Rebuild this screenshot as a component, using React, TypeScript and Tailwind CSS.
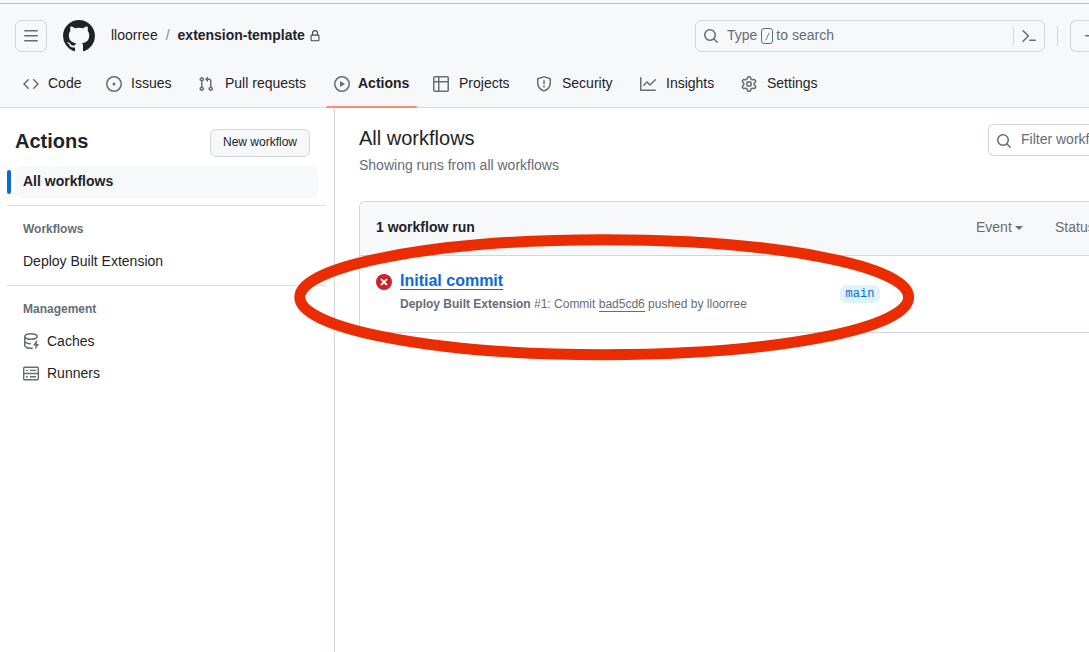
import type { ReactNode } from 'react';

const paths = {
  bars: 'M1 2.75A.75.75 0 0 1 1.75 2h12.5a.75.75 0 0 1 0 1.5H1.75A.75.75 0 0 1 1 2.75Zm0 5A.75.75 0 0 1 1.75 7h12.5a.75.75 0 0 1 0 1.5H1.75A.75.75 0 0 1 1 7.75ZM1.75 12h12.5a.75.75 0 0 1 0 1.5H1.75a.75.75 0 0 1 0-1.5Z',
  github:
    'M8 0c4.42 0 8 3.58 8 8a8.013 8.013 0 0 1-5.45 7.59c-.4.08-.55-.17-.55-.38 0-.27.01-1.13.01-2.2 0-.75-.25-1.23-.54-1.48 1.78-.2 3.65-.88 3.65-3.95 0-.88-.31-1.59-.82-2.15.08-.2.36-1.02-.08-2.12 0 0-.67-.22-2.2.82-.64-.18-1.32-.27-2-.27-.68 0-1.36.09-2 .27-1.53-1.03-2.2-.82-2.2-.82-.44 1.1-.16 1.92-.08 2.12-.51.56-.82 1.28-.82 2.15 0 3.06 1.86 3.75 3.64 3.95-.23.2-.44.55-.51 1.07-.46.21-1.61.55-2.33-.66-.15-.24-.6-.83-1.23-.82-.67.01-.27.38.01.53.34.19.73.9.82 1.13.16.45.68 1.31 2.69.94 0 .67.01 1.3.01 1.49 0 .21-.15.45-.55.38A7.995 7.995 0 0 1 0 8c0-4.42 3.58-8 8-8Z',
  lock: 'M4 4a4 4 0 0 1 8 0v2h.25c.966 0 1.75.784 1.75 1.75v5.5A1.75 1.75 0 0 1 12.25 15h-8.5A1.75 1.75 0 0 1 2 13.25v-5.5C2 6.784 2.784 6 3.75 6H4Zm8.25 3.5h-8.5a.25.25 0 0 0-.25.25v5.5c0 .138.112.25.25.25h8.5a.25.25 0 0 0 .25-.25v-5.5a.25.25 0 0 0-.25-.25ZM10.5 6V4a2.5 2.5 0 1 0-5 0v2Z',
  code: 'm11.28 3.22 4.25 4.25a.75.75 0 0 1 0 1.06l-4.25 4.25a.749.749 0 0 1-1.275-.326.749.749 0 0 1 .215-.734L13.94 8l-3.72-3.72a.749.749 0 0 1 .326-1.275.749.749 0 0 1 .734.215Zm-6.56 0a.751.751 0 0 1 1.042.018.751.751 0 0 1 .018 1.042L2.06 8l3.72 3.72a.749.749 0 0 1-.326 1.275.749.749 0 0 1-.734-.215L.47 8.53a.75.75 0 0 1 0-1.06Z',
  issue:
    'M8 9.5a1.5 1.5 0 1 0 0-3 1.5 1.5 0 0 0 0 3ZM8 0a8 8 0 1 1 0 16A8 8 0 0 1 8 0ZM1.5 8a6.5 6.5 0 1 0 13 0 6.5 6.5 0 0 0-13 0Z',
  pull: 'M1.5 3.25a2.25 2.25 0 1 1 3 2.122v5.256a2.251 2.251 0 1 1-1.5 0V5.372A2.25 2.25 0 0 1 1.5 3.25Zm5.677-.177L9.573.677A.25.25 0 0 1 10 .854V2.5h1A2.5 2.5 0 0 1 13.5 5v5.628a2.251 2.251 0 1 1-1.5 0V5a1 1 0 0 0-1-1h-1v1.646a.25.25 0 0 1-.427.177L7.177 3.427a.25.25 0 0 1 0-.354ZM3.75 2.5a.75.75 0 1 0 0 1.5.75.75 0 0 0 0-1.5Zm0 9.5a.75.75 0 1 0 0 1.5.75.75 0 0 0 0-1.5Zm8.25.75a.75.75 0 1 0 1.5 0 .75.75 0 0 0-1.5 0Z',
  play: 'M8 0a8 8 0 1 1 0 16A8 8 0 0 1 8 0ZM1.5 8a6.5 6.5 0 1 0 13 0 6.5 6.5 0 0 0-13 0Zm4.879-2.773 4.264 2.559a.25.25 0 0 1 0 .428l-4.264 2.559A.25.25 0 0 1 6 10.559V5.442a.25.25 0 0 1 .379-.215Z',
  table:
    'M0 1.75C0 .784.784 0 1.75 0h12.5C15.216 0 16 .784 16 1.75v12.5A1.75 1.75 0 0 1 14.25 16H1.75A1.75 1.75 0 0 1 0 14.25ZM6.5 6.5v8h7.75a.25.25 0 0 0 .25-.25V6.5Zm8-1.5V1.75a.25.25 0 0 0-.25-.25H6.5V5Zm-13 1.5v7.75c0 .138.112.25.25.25H5v-8ZM5 5V1.5H1.75a.25.25 0 0 0-.25.25V5Z',
  shield:
    'M7.467.133a1.748 1.748 0 0 1 1.066 0l5.25 1.68A1.75 1.75 0 0 1 15 3.48V7c0 1.566-.32 3.182-1.303 4.682-.983 1.498-2.585 2.813-5.032 3.855a1.697 1.697 0 0 1-1.33 0c-2.447-1.042-4.049-2.357-5.032-3.855C1.32 10.182 1 8.566 1 7V3.48a1.75 1.75 0 0 1 1.217-1.667Zm.61 1.429a.25.25 0 0 0-.153 0l-5.25 1.68a.25.25 0 0 0-.174.238V7c0 1.358.275 2.666 1.057 3.86.784 1.194 2.121 2.34 4.366 3.297a.196.196 0 0 0 .154 0c2.245-.956 3.582-2.104 4.366-3.298C13.225 9.666 13.5 8.36 13.5 7V3.48a.251.251 0 0 0-.174-.237l-5.25-1.68ZM8.75 4.75v3a.75.75 0 0 1-1.5 0v-3a.75.75 0 0 1 1.5 0ZM9 10.5a1 1 0 1 1-2 0 1 1 0 0 1 2 0Z',
  graph:
    'M1.5 1.75V13.5h13.75a.75.75 0 0 1 0 1.5H.75a.75.75 0 0 1-.75-.75V1.75a.75.75 0 0 1 1.5 0Zm14.28 2.53-5.25 5.25a.75.75 0 0 1-1.06 0L7 7.06 4.28 9.78a.751.751 0 0 1-1.042-.018.751.751 0 0 1-.018-1.042l3.25-3.25a.75.75 0 0 1 1.06 0L10 7.94l4.72-4.72a.751.751 0 0 1 1.042.018.751.751 0 0 1 .018 1.042Z',
  gear: 'M8 0a8.2 8.2 0 0 1 .701.031C9.444.095 9.99.645 10.16 1.29l.288 1.107c.018.066.079.158.212.224.231.114.454.243.668.386.123.082.233.09.299.071l1.103-.303c.644-.176 1.392.021 1.82.63.27.385.506.792.704 1.218.315.675.111 1.422-.364 1.891l-.814.806c-.049.048-.098.147-.088.294.016.257.016.515 0 .772-.01.147.038.246.088.294l.814.806c.475.469.679 1.216.364 1.891a7.977 7.977 0 0 1-.704 1.217c-.428.61-1.176.807-1.82.63l-1.102-.302c-.067-.019-.177-.011-.3.071a5.909 5.909 0 0 1-.668.386c-.133.066-.194.158-.211.224l-.29 1.106c-.168.646-.715 1.196-1.458 1.26a8.006 8.006 0 0 1-1.402 0c-.743-.064-1.289-.614-1.458-1.26l-.289-1.106c-.018-.066-.079-.158-.212-.224a5.738 5.738 0 0 1-.668-.386c-.123-.082-.233-.09-.299-.071l-1.103.303c-.644.176-1.392-.021-1.82-.63a8.12 8.12 0 0 1-.704-1.218c-.315-.675-.111-1.422.363-1.891l.815-.806c.05-.048.098-.147.088-.294a6.214 6.214 0 0 1 0-.772c.01-.147-.038-.246-.088-.294l-.815-.806C.635 6.045.431 5.298.746 4.623a7.92 7.92 0 0 1 .704-1.217c.428-.61 1.176-.807 1.82-.63l1.102.302c.067.019.177.011.3-.071.214-.143.437-.272.668-.386.133-.066.194-.158.211-.224l.29-1.106C6.009.645 6.556.095 7.299.03 7.53.01 7.764 0 8 0Zm-.571 1.525c-.036.003-.108.036-.137.146l-.289 1.105c-.147.561-.549.967-.998 1.189-.173.086-.34.183-.5.29-.417.278-.97.423-1.529.27l-1.103-.303c-.109-.03-.175.016-.195.045-.22.312-.412.644-.573.99-.014.031-.021.11.059.19l.815.806c.411.406.562.957.53 1.456a4.709 4.709 0 0 0 0 .582c.032.499-.119 1.05-.53 1.456l-.815.806c-.081.08-.073.159-.059.19.162.346.353.677.573.989.02.03.085.076.195.046l1.102-.303c.56-.153 1.113-.008 1.53.27.161.107.328.204.501.29.447.222.85.629.997 1.189l.289 1.105c.029.109.101.143.137.146a6.6 6.6 0 0 0 1.142 0c.036-.003.108-.036.137-.146l.289-1.105c.147-.561.549-.967.998-1.189.173-.086.34-.183.5-.29.417-.278.97-.423 1.529-.27l1.103.303c.109.029.175-.016.195-.045.22-.313.411-.644.573-.99.014-.031.021-.11-.059-.19l-.815-.806c-.411-.406-.562-.957-.53-1.456a4.709 4.709 0 0 0 0-.582c-.032-.499.119-1.05.53-1.456l.815-.806c.081-.08.073-.159.059-.19a6.464 6.464 0 0 0-.573-.989c-.02-.03-.085-.076-.195-.046l-1.102.303c-.56.153-1.113.008-1.53-.27a4.44 4.44 0 0 0-.501-.29c-.447-.222-.85-.629-.997-1.189l-.289-1.105c-.029-.11-.101-.143-.137-.146a6.6 6.6 0 0 0-1.142 0ZM11 8a3 3 0 1 1-6 0 3 3 0 0 1 6 0ZM9.5 8a1.5 1.5 0 1 0-3.001.001A1.5 1.5 0 0 0 9.5 8Z',
  search:
    'M10.68 11.74a6 6 0 0 1-7.922-8.982 6 6 0 0 1 8.982 7.922l3.04 3.04a.749.749 0 0 1-.326 1.275.749.749 0 0 1-.734-.215ZM11.5 7a4.499 4.499 0 1 0-8.997 0A4.499 4.499 0 0 0 11.5 7Z',
  prompt:
    'm6.354 8.04-4.773 4.773a.75.75 0 1 0 1.061 1.06L7.945 8.57a.75.75 0 0 0 0-1.06L2.642 2.206a.75.75 0 0 0-1.06 1.061L6.353 8.04ZM8.75 11.5a.75.75 0 0 0 0 1.5h5.5a.75.75 0 0 0 0-1.5h-5.5Z',
  plus: 'M7.75 2a.75.75 0 0 1 .75.75V7h4.25a.75.75 0 0 1 0 1.5H8.5v4.25a.75.75 0 0 1-1.5 0V8.5H2.75a.75.75 0 0 1 0-1.5H7V2.75A.75.75 0 0 1 7.75 2Z',
  cache:
    'M2.5 5.724V8c0 .248.238.7 1.169 1.159.874.43 2.144.745 3.62.822a.75.75 0 1 1-.078 1.498c-1.622-.085-3.102-.432-4.204-.975a5.565 5.565 0 0 1-.507-.28V12.5c0 .133.058.318.282.551.227.237.591.483 1.101.707 1.015.447 2.47.742 4.117.742.406 0 .802-.018 1.183-.052a.751.751 0 1 1 .134 1.494C8.89 15.98 8.45 16 8 16c-1.805 0-3.475-.32-4.721-.869-.623-.274-1.173-.619-1.579-1.041-.408-.425-.7-.964-.7-1.59v-9c0-.626.292-1.165.7-1.591.406-.42.956-.766 1.579-1.04C4.525.32 6.195 0 8 0c1.806 0 3.476.32 4.721.869.623.274 1.173.619 1.579 1.041.408.425.7.964.7 1.59 0 .626-.292 1.165-.7 1.591-.406.42-.956.766-1.578 1.04C11.475 6.68 9.805 7 8 7c-1.805 0-3.475-.32-4.721-.869a6.15 6.15 0 0 1-.779-.407Zm0-2.224c0 .133.058.318.282.551.227.237.591.483 1.101.707C4.898 5.205 6.353 5.5 8 5.5c1.646 0 3.101-.295 4.118-.742.508-.224.873-.471 1.1-.708.224-.232.282-.417.282-.55 0-.133-.058-.318-.282-.551-.227-.237-.591-.483-1.101-.707C11.102 1.795 9.647 1.5 8 1.5c-1.646 0-3.101.295-4.118.742-.508.224-.873.471-1.1.708-.224.232-.282.417-.282.55ZM14.49 7.582a.375.375 0 0 0-.66-.313l-3.625 4.625a.375.375 0 0 0 .295.606h2.127l-.619 2.922a.375.375 0 0 0 .666.304l3.125-4.125A.375.375 0 0 0 15.5 11h-1.778l.769-3.418Z',
};

function Icon({ name, className = '' }: { name: keyof typeof paths; className?: string }) {
  return (
    <svg viewBox="0 0 16 16" className={`shrink-0 fill-current ${className || 'size-4'}`} aria-hidden="true">
      <path d={paths[name]} />
    </svg>
  );
}

function RunnersIcon() {
  return (
    <svg viewBox="0 0 16 16" className="size-4 shrink-0" fill="none" stroke="currentColor" strokeWidth="1.4" aria-hidden="true">
      <rect x="0.7" y="2.2" width="14.6" height="12.6" rx="1" />
      <path d="M.7 8.5h14.6M3 5.4h1.7M6.8 5.4H13M3 11.7h1.7M6.8 11.7H13" />
    </svg>
  );
}

function FailedIcon() {
  return (
    <svg viewBox="0 0 16 16" className="size-4 shrink-0" aria-hidden="true">
      <circle cx="8" cy="8" r="8" fill="#cf222e" />
      <path d="m5.6 5.6 4.8 4.8m0-4.8-4.8 4.8" stroke="#fff" strokeWidth="2" strokeLinecap="round" />
    </svg>
  );
}

type Tab = { icon: keyof typeof paths; label: string; width: string; gap: string; active?: boolean };

const tabs: Tab[] = [
  { icon: 'code', label: 'Code', width: 'w-[83px]', gap: 'gap-[9px]' },
  { icon: 'issue', label: 'Issues', width: 'w-[92px]', gap: 'gap-[9px]' },
  { icon: 'pull', label: 'Pull requests', width: 'w-[136px]', gap: 'gap-[11px]' },
  { icon: 'play', label: 'Actions', width: 'w-[99px]', gap: 'gap-[8px]', active: true },
  { icon: 'table', label: 'Projects', width: 'w-[103px]', gap: 'gap-[10px]' },
  { icon: 'shield', label: 'Security', width: 'w-[104px]', gap: 'gap-[10px]' },
  { icon: 'graph', label: 'Insights', width: 'w-[101px]', gap: 'gap-[10px]' },
  { icon: 'gear', label: 'Settings', width: 'w-[90px]', gap: 'gap-[10px]' },
];

function Header() {
  return (
    <header className="h-[108px] border-b border-[#d0d7de] bg-[#f6f8fa]">
      <div className="h-[4px] border-b border-[#b9bcc0]" />
      <div className="flex h-[64px] items-center pl-[15px]">
        <button className="flex size-8 shrink-0 items-center justify-center rounded-md border border-[#d0d7de] text-[#656d76]">
          <Icon name="bars" />
        </button>
        <Icon name="github" className="ml-4 size-8 text-[#1f2328]" />
        <nav className="ml-4 flex items-center pb-[2px] leading-5">
          <span>lloorree</span>
          <span className="mx-[8px] text-[#848d97]">/</span>
          <span className="font-bold tracking-[-0.02px]">extension-template</span>
          <Icon name="lock" className="mt-[2px] ml-[4px] size-3 text-[#424950]" />
        </nav>
        <div className="ml-auto flex shrink-0 items-center">
          <div className="flex h-8 w-[350px] items-center rounded-md border border-[#d0d7de] pl-[7px] text-[#656d76]">
            <Icon name="search" />
            <span className="ml-[8px] flex items-center pb-[2px]">
              Type
              <kbd className="mr-[3px] ml-[4px] mt-[2px] flex h-4 w-3 items-center justify-center rounded-[3px] border border-[#656d76]">
                <svg viewBox="0 0 6 10" className="h-[9px] w-[5px]" aria-hidden="true">
                  <path d="M5 .5 1 9.5" stroke="currentColor" strokeWidth="1" fill="none" />
                </svg>
              </kbd>
              to search
            </span>
            <span className="ml-auto flex h-5 items-center border-l border-[#d0d7de] pr-[7px] pl-[7px]">
              <Icon name="prompt" />
            </span>
          </div>
          <div className="mx-3 h-5 w-px bg-[#d0d7de]" />
          <div className="flex h-8 w-[19px] items-center overflow-hidden rounded-l-md border border-r-0 border-[#d0d7de] pl-[12px] text-[#656d76]">
            <Icon name="plus" />
          </div>
        </div>
      </div>
      <nav className="flex h-[40px] pl-[23px]">
        {tabs.map((tab) => (
          <a key={tab.label} className={`relative flex h-8 shrink-0 items-center ${tab.gap} ${tab.width}`}>
            <Icon name={tab.icon} className="size-4 text-[#656d76]" />
            <span className={tab.active ? 'pb-[2px] font-bold' : 'pb-[2px]'}>{tab.label}</span>
            {tab.active && <span className="absolute top-[38px] -left-[8px] h-[2px] w-[91px] rounded-md bg-[#fd8c73]" />}
          </a>
        ))}
      </nav>
    </header>
  );
}

function SectionTitle({ children }: { children: ReactNode }) {
  return <h3 className="pl-4 text-[12px] leading-[18px] font-bold text-[#656d76]">{children}</h3>;
}

function Sidebar() {
  return (
    <aside className="w-[335px] shrink-0 border-r border-[#d0d7de] pr-2 pl-[7px]">
      <div className="flex h-[58px] items-center justify-between pt-[11px] pr-4 pl-2">
        <h2 className="pb-[3px] text-[20px] leading-[30px] font-bold">Actions</h2>
        <button className="h-7 w-[100px] rounded-md border border-[#d0d7de] bg-[#f6f8fa] pb-[2px] text-[12px] leading-5">
          New workflow
        </button>
      </div>
      <div className="flex items-center pr-2">
        <span className="h-6 w-1 rounded-md bg-[#0969da]" />
        <a className="ml-1 flex h-8 grow items-center rounded-md bg-[#f6f8fa] pb-[2px] pl-2 font-bold">All workflows</a>
      </div>
      <hr className="mt-[7px] border-[#d8dee4]" />
      <div className="pt-[14px]">
        <SectionTitle>Workflows</SectionTitle>
        <a className="mt-[7px] flex h-8 items-center pl-4">Deploy Built Extension</a>
      </div>
      <hr className="mt-[8px] border-[#d8dee4]" />
      <div className="pt-[14px]">
        <SectionTitle>Management</SectionTitle>
        <a className="mt-[7px] flex h-8 items-center gap-2 pl-4">
          <span className="text-[#656d76]">
            <Icon name="cache" />
          </span>
          <span className="pb-px">Caches</span>
        </a>
        <a className="flex h-8 items-center gap-2 pl-4">
          <span className="text-[#656d76]">
            <RunnersIcon />
          </span>
          <span className="pb-px">Runners</span>
        </a>
      </div>
    </aside>
  );
}

function Runs() {
  return (
    <main className="min-w-0 grow pt-4 pl-6">
      <div className="flex h-[78px] justify-between">
        <div>
          <h1 className="text-[20px] leading-[28px]">All workflows</h1>
          <p className="mt-[2px] leading-[22px] text-[#656d76]">Showing runs from all workflows</p>
        </div>
        <div className="flex h-8 w-[101px] items-center overflow-hidden rounded-l-md border border-r-0 border-[#d0d7de] pl-[7px] whitespace-nowrap text-[#656d76]">
          <Icon name="search" className="mt-[2px] size-4" />
          <span className="ml-[9px] pb-[2px]">Filter workflow runs</span>
        </div>
      </div>
      <section className="-mt-px rounded-tl-md border border-r-0 border-[#d0d7de]">
        <div className="flex h-[54px] items-center rounded-tl-md border-b border-[#d0d7de] bg-[#f6f8fa] pl-4">
          <strong className="pb-[3px]">1 workflow run</strong>
          <div className="ml-auto flex pb-[3px] text-[#656d76]">
            <span className="flex w-[79px] items-center gap-[3px]">
              Event
              <span className="mt-[2px] border-x-4 border-t-4 border-x-transparent border-t-[#656d76]" />
            </span>
            <span className="w-[34px] overflow-hidden">Status</span>
          </div>
        </div>
        <div className="flex h-[76px] pl-4">
          <span className="mt-[18px]">
            <FailedIcon />
          </span>
          <div className="ml-2 w-[440px] pt-[15px]">
            <a className="block w-fit text-[16px] leading-[20px] font-bold text-[#0969da]">
              <span className="underline decoration-1 underline-offset-[3px]">Initial commit</span>
            </a>
            <p className="mt-[4px] text-[12px] leading-[18px] text-[#656d76]">
              <strong>Deploy Built Extension</strong> #1: Commit{' '}
              <span className="border-b border-[#656d76]">bad5cd6</span> pushed by lloorree
            </p>
          </div>
          <span className="mt-[29px] flex h-[18px] w-10 items-center justify-center rounded-md bg-[#ddf4ff] font-['Liberation_Mono',monospace] text-[12px] text-[#0969da]">
            main
          </span>
        </div>
      </section>
    </main>
  );
}

export default function App() {
  return (
    <div className="relative flex h-[652px] w-[1089px] flex-col overflow-hidden bg-white font-['Liberation_Sans',Arial,sans-serif] text-[14px] leading-5 text-[#1f2328]">
      <Header />
      <div className="flex grow">
        <Sidebar />
        <Runs />
      </div>
      <svg className="pointer-events-none absolute top-[230px] left-[290px] h-[134px] w-[630px]" viewBox="290 230 630 134" aria-hidden="true">
        <ellipse cx="604.2" cy="297.2" rx="304.4" ry="57.5" fill="none" stroke="#ea2c00" strokeWidth="11" />
      </svg>
    </div>
  );
}
